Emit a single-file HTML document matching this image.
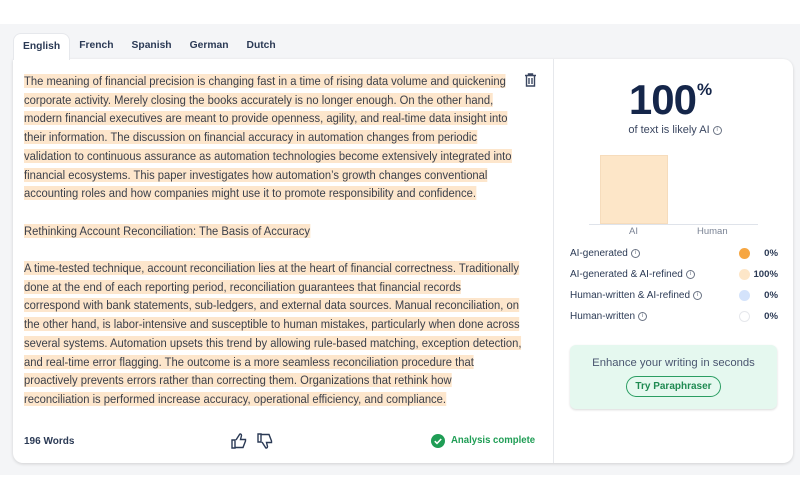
<!DOCTYPE html>
<html><head><meta charset="utf-8"><style>
*{margin:0;padding:0;box-sizing:border-box}
body{width:800px;height:500px;background:#fff;font-family:"Liberation Sans",sans-serif;position:relative;overflow:hidden;color:#2b3a55}
.bg{position:absolute;left:0;top:24px;width:800px;height:451px;background:#f4f5f7}
.tabs{position:absolute;left:13px;top:33px;height:27px;display:flex}
.tab{font-size:10.3px;font-weight:bold;color:#2b3a55;padding:0 9px;line-height:26px}
.tab.a{background:#fff;border-radius:8px 8px 0 0;border:1px solid #e6e8ec;border-bottom:none}
.card{position:absolute;left:13px;top:59px;width:780px;height:404px;background:#fff;border-radius:0 10px 10px 10px;box-shadow:0 1px 3px rgba(0,0,0,.15)}
.txt{position:absolute;left:24px;top:72px;font-size:12.3px;line-height:18.7px;color:#3a3f4a;white-space:nowrap;transform:scaleX(.912);transform-origin:0 0}
.txt span{background:#fde6cc}
.div{position:absolute;left:553px;top:59px;width:1px;height:404px;background:#e6e8ec}
.big{position:absolute;left:600px;top:76px;width:140px;text-align:center;font-size:42px;color:#15264a;font-weight:bold;letter-spacing:-1px}
.big sup{font-size:17px;vertical-align:top;position:relative;top:4px;margin-left:1px}
.sub{position:absolute;left:555px;top:124px;width:240px;text-align:center;font-size:11px;color:#3a4660}
.i{display:inline-block;width:9px;height:9px;border:1px solid #6a7384;border-radius:50%;font-size:6px;line-height:7px;text-align:center;vertical-align:middle;margin-left:3px;color:#6a7384}
.leg{position:absolute;left:570px;font-size:10px;color:#2b3a55;width:208px}
.leg b{position:absolute;right:0;font-weight:bold;font-size:9.6px}
.dot{position:absolute;left:169px;top:0;width:11px;height:11px;border-radius:50%}
</style></head><body>
<div class="bg"></div>
<div class="card"></div>
<div class="tabs"><div class="tab a">English</div><div class="tab">French</div><div class="tab">Spanish</div><div class="tab">German</div><div class="tab">Dutch</div></div>
<div class="txt">
<span>The meaning of financial precision is changing fast in a time of rising data volume and quickening</span><br>
<span>corporate activity. Merely closing the books accurately is no longer enough. On the other hand,</span><br>
<span>modern financial executives are meant to provide openness, agility, and real-time data insight into</span><br>
<span>their information. The discussion on financial accuracy in automation changes from periodic</span><br>
<span>validation to continuous assurance as automation technologies become extensively integrated into</span><br>
<span>financial ecosystems. This paper investigates how automation’s growth changes conventional</span><br>
<span>accounting roles and how companies might use it to promote responsibility and confidence.</span><br>
<br>
<span>Rethinking Account Reconciliation: The Basis of Accuracy</span><br>
<br>
<span>A time-tested technique, account reconciliation lies at the heart of financial correctness. Traditionally</span><br>
<span>done at the end of each reporting period, reconciliation guarantees that financial records</span><br>
<span>correspond with bank statements, sub-ledgers, and external data sources. Manual reconciliation, on</span><br>
<span>the other hand, is labor-intensive and susceptible to human mistakes, particularly when done across</span><br>
<span>several systems. Automation upsets this trend by allowing rule-based matching, exception detection,</span><br>
<span>and real-time error flagging. The outcome is a more seamless reconciliation procedure that</span><br>
<span>proactively prevents errors rather than correcting them. Organizations that rethink how</span><br>
<span>reconciliation is performed increase accuracy, operational efficiency, and compliance.</span>
</div>
<svg style="position:absolute;left:524px;top:73px" width="13" height="14" viewBox="0 0 13 14"><path d="M1 2.5h11M4.5 2.5V1h4v1.5M2.5 2.5v10.5h8V2.5M5 5v6M8 5v6" fill="none" stroke="#3a4660" stroke-width="1.4"/></svg>
<div style="position:absolute;left:24px;top:436px;font-size:10px;font-weight:bold;color:#2b3a55">196 Words</div>
<svg style="position:absolute;left:231px;top:433px" width="17" height="16" viewBox="0 0 17 16"><path d="M1 7h3v8H1zM4 14.5h8l2.5-6.5V6.5H9.5L10.5 2.5C10.5 1 9 .5 8.5 1.5L5 7" fill="none" stroke="#2b3a55" stroke-width="1.4"/></svg>
<svg style="position:absolute;left:257px;top:433px" width="17" height="16" viewBox="0 0 17 16"><path d="M1 1h3v8H1zM4 1.5h8l2.5 6.5v1.5H9.5l1 4c0 1.5-1.5 2-2 1L5 9" fill="none" stroke="#2b3a55" stroke-width="1.4"/></svg>
<svg style="position:absolute;left:431px;top:434px" width="14" height="14" viewBox="0 0 14 14"><circle cx="7" cy="7" r="7" fill="#1f9d55"/><path d="M3.8 7.2l2.2 2.2 4.2-4.4" fill="none" stroke="#fff" stroke-width="1.6"/></svg>
<div style="position:absolute;left:451px;top:435px;font-size:10.3px;font-weight:bold;color:#1f9d55;transform:scaleX(.93);transform-origin:0 0">Analysis complete</div>
<div class="div"></div>
<div class="big">100<sup>%</sup></div>
<div class="sub">of text is likely AI<span class="i">i</span></div>
<div style="position:absolute;left:600px;top:155px;width:68px;height:69px;background:#fde6c8;border:1px solid #f6dcbc"></div>
<div style="position:absolute;left:589px;top:224px;width:169px;height:1px;background:#dfe3ea"></div>
<div style="position:absolute;left:629px;top:226px;font-size:9.5px;color:#7a8394">AI</div>
<div style="position:absolute;left:697px;top:226px;font-size:9.5px;color:#7a8394">Human</div>
<div class="leg" style="top:248px">AI-generated<span class="i">i</span><span class="dot" style="background:#f6a642"></span><b>0%</b></div>
<div class="leg" style="top:269px">AI-generated &amp; AI-refined<span class="i">i</span><span class="dot" style="background:#fde6c8"></span><b>100%</b></div>
<div class="leg" style="top:290px">Human-written &amp; AI-refined<span class="i">i</span><span class="dot" style="background:#d4e3fb"></span><b>0%</b></div>
<div class="leg" style="top:311px">Human-written<span class="i">i</span><span class="dot" style="background:#fff;border:1px solid #e6e8ec"></span><b>0%</b></div>
<div style="position:absolute;left:570px;top:345px;width:207px;height:64px;background:#e5f8ef;border-radius:6px;box-shadow:0 1px 2px rgba(0,0,0,.15)">
<div style="text-align:center;margin-top:12px;font-size:11.3px;color:#4a5670">Enhance your writing in seconds</div>
<div style="margin:7px auto 0;width:95px;height:21px;border:1px solid #2a9d62;border-radius:11px;text-align:center;font-size:10px;font-weight:bold;color:#1f8a52;line-height:19px">Try Paraphraser</div>
</div>
</body></html>
